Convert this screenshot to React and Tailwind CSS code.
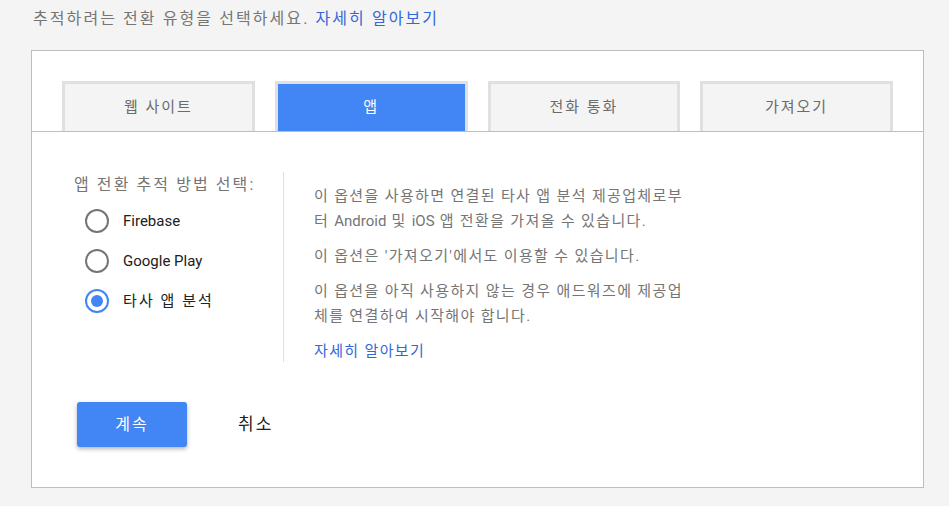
import React, { useState } from 'react';

const tabs = ['웹 사이트', '앱', '전화 통화', '가져오기'];
const options = ['Firebase', 'Google Play', '타사 앱 분석'];

// Latin words keep normal spacing; the Hangul around them is spaced wider
const Latin = ({ children }) => <span className="tracking-normal">{children}</span>;

const Radio = ({ checked }) => (
  <span
    className={`flex h-[24px] w-[24px] shrink-0 items-center justify-center rounded-full border-2 ${
      checked ? 'border-[#4285f4]' : 'border-[#757575]'
    }`}
  >
    {checked && <span className="h-[12px] w-[12px] rounded-full bg-[#4285f4]" />}
  </span>
);

const App = () => {
  const [tab, setTab] = useState(1);
  const [choice, setChoice] = useState(2);

  return (
    <div
      className="min-h-[506px] bg-[#f4f4f4] px-[31px] pt-[6px] tracking-[0.13em]"
      style={{ fontFamily: "Roboto, 'Noto Sans CJK KR', sans-serif" }}
    >
      <p className="ml-[2px] h-[44px] text-[16px] leading-[26px] text-[#757575]">
        추적하려는 전환 유형을 선택하세요.{' '}
        <a className="text-[#3367d6]">자세히 알아보기</a>
      </p>

      <div className="w-[893px] border border-[#bdbdbd] bg-white">
        <div className="flex gap-[20px] border-b border-[#bdbdbd] px-[30px] pt-[30px]">
          {tabs.map((t, i) => (
            <button
              key={t}
              onClick={() => setTab(i)}
              className={`h-[50px] w-[193px] border-[3px] border-b-0 border-[#e0e0e0] text-[15px] tracking-[0.13em] ${
                tab === i ? 'bg-[#4285f4] text-white' : 'bg-[#f4f4f4] text-[#6b6b6b]'
              }`}
            >
              {t}
            </button>
          ))}
        </div>

        <div className="flex pl-[42px] pt-[40px]">
          <div className="w-[209px] pt-[1px]">
            <p className="text-[16px] leading-[24px] text-[#757575]">앱 전환 추적 방법 선택:</p>
            <div className="mt-[12px] flex flex-col gap-[16px] pl-[11px]">
              {options.map((o, i) => (
                <label
                  key={o}
                  onClick={() => setChoice(i)}
                  className="flex h-[24px] cursor-pointer items-center gap-[14px] text-[15px] text-[#212121]"
                >
                  <Radio checked={choice === i} />
                  {i < 2 ? <Latin>{o}</Latin> : o}
                </label>
              ))}
            </div>
          </div>

          <div className="h-[190px] w-px bg-[#e0e0e0]" />

          <div className="w-[408px] break-all pl-[30px] pt-[12px] text-[15px] leading-[25px] tracking-[0.09em] text-[#757575]">
            <p>
              이 옵션을 사용하면 연결된 타사 앱 분석 제공업체로부터 <Latin>Android</Latin> 및{' '}
              <Latin>iOS</Latin> 앱 전환을 가져올 수 있습니다.
            </p>
            <p className="mt-[10px]">이 옵션은 '가져오기'에서도 이용할 수 있습니다.</p>
            <p className="mt-[10px]">이 옵션을 아직 사용하지 않는 경우 애드워즈에 제공업체를 연결하여 시작해야 합니다.</p>
            <a className="mt-[10px] block text-[#3367d6]">자세히 알아보기</a>
          </div>
        </div>

        <div className="flex items-center px-[45px] pb-[40px] pt-[38px]">
          <button className="h-[45px] w-[110px] rounded-[3px] bg-[#4285f4] text-[16px] tracking-[0.13em] text-white shadow-[0_2px_4px_rgba(0,0,0,0.3)]">
            계속
          </button>
          <button className="ml-[51px] text-[17px] tracking-[0.13em] text-[#212121]">취소</button>
        </div>
      </div>
    </div>
  );
};

export default App;
